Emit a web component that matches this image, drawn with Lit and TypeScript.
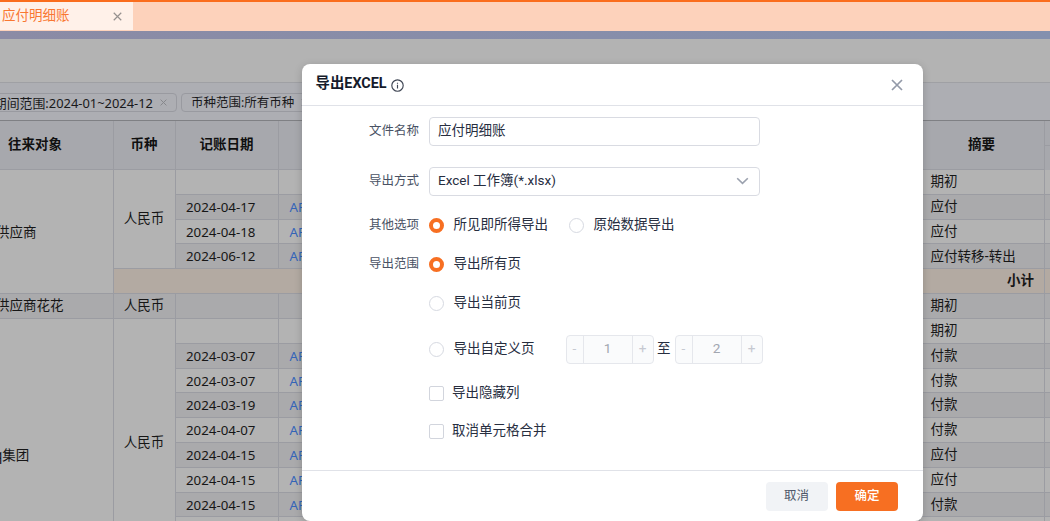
import { LitElement, html, css, svg, nothing } from "lit";
import { customElement, property } from "lit/decorators.js";

const cross = (size: number, width: number) => html`<svg width=${size} height=${size} viewBox="0 0 12 12" fill="none" stroke="currentColor" stroke-width=${width}>${svg`<path d="M1 1 11 11M11 1 1 11"/>`}</svg>`;

interface Row {
  date?: string;
  memo: string;
  sub?: boolean;
}

const rows: Row[] = [
  { memo: "期初" },
  { date: "2024-04-17", memo: "应付" },
  { date: "2024-04-18", memo: "应付" },
  { date: "2024-06-12", memo: "应付转移-转出" },
  { memo: "小计", sub: true },
  { memo: "期初" },
  { memo: "期初" },
  { date: "2024-03-07", memo: "付款" },
  { date: "2024-03-07", memo: "付款" },
  { date: "2024-03-19", memo: "付款" },
  { date: "2024-04-07", memo: "付款" },
  { date: "2024-04-15", memo: "应付" },
  { date: "2024-04-15", memo: "应付" },
  { date: "2024-04-15", memo: "付款" },
  { memo: "" },
];

@customElement("ledger-table")
class LedgerTable extends LitElement {
  static styles = css`
    :host { display: block; color: #161616; font: 13.5px/1 "Noto Sans", "Noto Sans CJK SC", sans-serif; }
    .head, .body { display: grid; grid-template-columns: 114px 62px 103px 641px 125px 5px; }
    .head { height: 50px; border-top: 1px solid #7f8084; background: #a7a8ad; font-weight: 700; color: #101010; box-sizing: border-box; }
    .head .cell { justify-content: center; padding-right: 1px; }
    .body { grid-auto-rows: 24.82px; background: #b3b3b3; }
    .cell { box-sizing: border-box; border-right: 1px solid #9b9ca2; border-bottom: 1px solid #9b9ca2; display: flex; align-items: center; white-space: nowrap; min-width: 0; overflow: hidden; }
    .head .first { justify-content: flex-start; padding-left: 8px; }
    .split { box-sizing: border-box; height: 25px; border-bottom: 1px solid #9b9ca2; }
    .odd { background: #aaaaac; }
    .date { padding: 1.5px 0 0 10px; font-size: 13.3px; }
    .link { padding: 1.5px 0 0 10.5px; color: #3465b8; font-size: 13.3px; }
    .memo { padding-left: 10.5px; }
    .sub { background: #b3aaa2; }
    .sub.memo { justify-content: flex-end; padding-right: 10px; font-weight: 700; }
    .flat { border-right: 0; }
    .center { justify-content: center; padding-right: 1px; }
    .party { grid-column: 1; }
    .cut { margin-left: -4px; }
    .cut2 { margin-left: -6px; }
    .g1 { grid-row: 1 / span 5; padding-top: 2px; }
    .c1 { grid-column: 2; grid-row: 1 / span 4; }
    .g2 { grid-row: 6; }
    .c2 { grid-column: 2; grid-row: 6; }
    .g3 { grid-row: 7 / span 11; padding-top: 2px; }
    .c3 { grid-column: 2; grid-row: 7 / span 10; padding-top: 1px; }
  `;

  render() {
    return html`
      <div class="head">
        <div class="cell first">往来对象</div>
        <div class="cell">币种</div>
        <div class="cell">记账日期</div>
        <div class="cell"></div>
        <div class="cell">摘要</div>
        <div class="split"></div>
      </div>
      <div class="body">
        <div class="cell party g1"><span class="cut">供应商</span></div>
        <div class="cell center c1">人民币</div>
        <div class="cell party g2 odd"><span class="cut">供应商花花</span></div>
        <div class="cell center c2 odd">人民币</div>
        <div class="cell party g3"><span class="cut2">q集团</span></div>
        <div class="cell center c3">人民币</div>
        ${rows.map((r, i) => {
          const tone = r.sub ? "sub" : i % 2 === 1 ? "odd" : "";
          const at = (col: string) => `grid-row:${i + 1};grid-column:${col}`;
          return html`
            ${r.sub
              ? html`<div class="cell sub flat" style=${at("2 / 5")}></div>`
              : html`
                  <div class="cell date ${tone}" style=${at("3")}>${r.date ?? nothing}</div>
                  <div class="cell link ${tone}" style=${at("4")}>${r.date ? "AP" : nothing}</div>
                `}
            <div class="cell memo ${tone}" style=${at("5")}>${r.memo}</div>
            <div class="cell flat ${tone}" style=${at("6")}></div>
          `;
        })}
      </div>
    `;
  }
}

@customElement("page-stepper")
class PageStepper extends LitElement {
  @property() value = "1";
  static styles = css`
    :host { display: grid; grid-template-columns: 16px 1fr 20px; width: 88px; height: 29px; box-sizing: border-box; border: 1px solid #e5e7ec; border-radius: 4px; background: #fafbfc; overflow: hidden; font: 13.6px/1 Roboto, sans-serif; color: #a2a6b0; }
    .part { display: flex; align-items: center; justify-content: center; }
    .sign { color: #c6c9d1; }
    .num { border: solid #e5e7ec; border-width: 0 1px; }
  `;
  render() {
    return html`<span class="part sign">-</span><span class="part num">${this.value}</span><span class="part sign">+</span>`;
  }
}

@customElement("export-dialog")
class ExportDialog extends LitElement {
  static styles = css`
    :host { display: flex; flex-direction: column; box-sizing: border-box; background: #fff; border-radius: 8px; box-shadow: 0 2px 8px rgba(0, 0, 0, 0.18); color: #272e3f; font: 13.5px/1 Roboto, "Noto Sans CJK SC", sans-serif; white-space: nowrap; overflow: hidden; }
    .header { height: 42px; box-sizing: border-box; border-bottom: 1.5px solid #e0e2e8; display: flex; align-items: center; padding: 0 20.5px 0 13.5px; }
    .title { font-size: 14.4px; font-weight: 700; color: #151b2b; margin-right: 4.5px; }
    .info { width: 13px; height: 13px; color: #3f4654; padding-top: 1px; }
    .close { margin-left: auto; color: #939aa9; display: flex; padding-top: 1px; }
    .form { flex: 1; display: flex; flex-direction: column; padding-top: 10.5px; }
    .row { display: flex; align-items: center; }
    .label { width: 117px; text-align: right; margin-right: 10px; font-size: 12.5px; color: #495264; }
    .r1, .r2 { height: 30px; margin-bottom: 19.5px; }
    .r2 { margin-bottom: 10px; }
    .r3, .r4, .r5 { height: 39px; }
    .r6 { height: 52px; }
    .r6 > span { padding-bottom: 1px; }
    .r7 { height: 38px; }
    .checks { margin-top: -1px; }
    .box { width: 331px; height: 29px; box-sizing: border-box; border: 1px solid #d9dbe2; border-radius: 4px; display: flex; align-items: center; justify-content: space-between; padding: 0 10px 2px 8px; }
    .select { padding-bottom: 0; }
    .select svg { color: #9ba1ae; }
    .radio { width: 15px; height: 15px; box-sizing: border-box; border: 1px solid #d6d9e1; border-radius: 50%; margin-right: 9.5px; flex: none; }
    .on { border: 4px solid #f76f22; }
    .r3 span, .r4 span, .r5 span { padding-bottom: 1px; }
    .check { width: 15px; height: 15px; box-sizing: border-box; border: 1px solid #d2d5dd; border-radius: 2px; margin-right: 8px; }
    .gap { margin-right: 21px; }
    .range { margin-right: 31px; }
    .to { margin: 0 4px 0 3.5px; }
    .footer { height: 51px; box-sizing: border-box; border-top: 1.5px solid #e0e2e8; display: flex; justify-content: flex-end; gap: 8.5px; padding: 11px 25px 0 0; }
    .btn { width: 62px; height: 29px; border-radius: 4px; display: flex; align-items: center; justify-content: center; background: #f1f3f6; color: #4e5869; font-size: 12.5px; }
    .primary { background: #f76f22; color: #fff; font-weight: 500; }
  `;

  render() {
    return html`
      <div class="header">
        <span class="title">导出EXCEL</span>
        <svg class="info" viewBox="0 0 13 13" fill="none" stroke="currentColor" stroke-width="1.15">
          <circle cx="6.5" cy="6.5" r="5.7" />
          <path d="M6.5 5.8V9.4M6.5 3.7V4.8" />
        </svg>
        <span class="close">${cross(12, 1.7)}</span>
      </div>
      <div class="form">
        <div class="row r1"><span class="label">文件名称</span><div class="box">应付明细账</div></div>
        <div class="row r2">
          <span class="label">导出方式</span>
          <div class="box select">
            Excel 工作簿(*.xlsx)
            <svg width="13" height="8" viewBox="0 0 14 8" fill="none" stroke="currentColor" stroke-width="1.7"><path d="M1.3 1 7 6.6 12.7 1" /></svg>
          </div>
        </div>
        <div class="row r3">
          <span class="label">其他选项</span>
          <i class="radio on"></i><span class="gap">所见即所得导出</span>
          <i class="radio"></i><span>原始数据导出</span>
        </div>
        <div class="row r4"><span class="label">导出范围</span><i class="radio on"></i><span>导出所有页</span></div>
        <div class="row r5"><span class="label"></span><i class="radio"></i><span>导出当前页</span></div>
        <div class="row r6">
          <span class="label"></span><i class="radio"></i><span class="range">导出自定义页</span>
          <page-stepper value="1"></page-stepper><span class="to">至</span><page-stepper value="2"></page-stepper>
        </div>
        <div class="checks">
          <div class="row r7"><span class="label"></span><i class="check"></i><span>导出隐藏列</span></div>
          <div class="row r7"><span class="label"></span><i class="check"></i><span>取消单元格合并</span></div>
        </div>
      </div>
      <div class="footer"><span class="btn">取消</span><span class="btn primary">确定</span></div>
    `;
  }
}

@customElement("app-root")
class AppRoot extends LitElement {
  static styles = css`
    :host { display: block; position: relative; width: 1050px; height: 521px; overflow: hidden; background: #b3b3b3; font: 13.5px/1 "Noto Sans", "Noto Sans CJK SC", sans-serif; white-space: nowrap; }
    .tabs { height: 31px; box-sizing: border-box; border-top: 2px solid #fa6d1d; background: #fdd2bb; display: flex; }
    .tab { width: 132.5px; height: 28px; box-sizing: border-box; padding: 0 11px 0 2px; background: #fff1e9; color: #f97731; display: flex; align-items: center; justify-content: space-between; }
    .tab svg { color: #96918f; }
    .band { height: 8px; background: linear-gradient(90deg, #8b8ba5, #8490ae); }
    .toolbar { height: 44px; box-sizing: border-box; border-bottom: 1px solid #9fa0a4; }
    .filters { height: 37px; box-sizing: border-box; background: #adaeb3; display: flex; align-items: center; gap: 4.5px; padding-top: 2px; color: #19191b; }
    .chip { height: 19px; box-sizing: border-box; border: 1px solid #999aa0; border-radius: 4px; display: flex; align-items: center; font-size: 12.5px; }
    .chip svg { color: #87888c; }
    .period { width: 190px; margin-left: -13.5px; padding-right: 9px; justify-content: flex-end; gap: 6.5px; font-size: 12.9px; }
    .currency { width: 140px; padding-left: 9px; gap: 7px; }
    .chip span { padding-top: 1px; }
    .dialog { position: absolute; left: 302px; top: 64px; width: 621px; height: 457px; }
  `;

  render() {
    return html`
      <div class="tabs"><div class="tab"><span>应付明细账</span>${cross(9, 1.6)}</div></div>
      <div class="band"></div>
      <div class="toolbar"></div>
      <div class="filters">
        <span class="chip period"><span>期间范围:2024-01~2024-12</span>${cross(7, 1.7)}</span>
        <span class="chip currency"><span>币种范围:所有币种</span>${cross(7, 1.7)}</span>
      </div>
      <ledger-table></ledger-table>
      <export-dialog class="dialog"></export-dialog>
    `;
  }
}
